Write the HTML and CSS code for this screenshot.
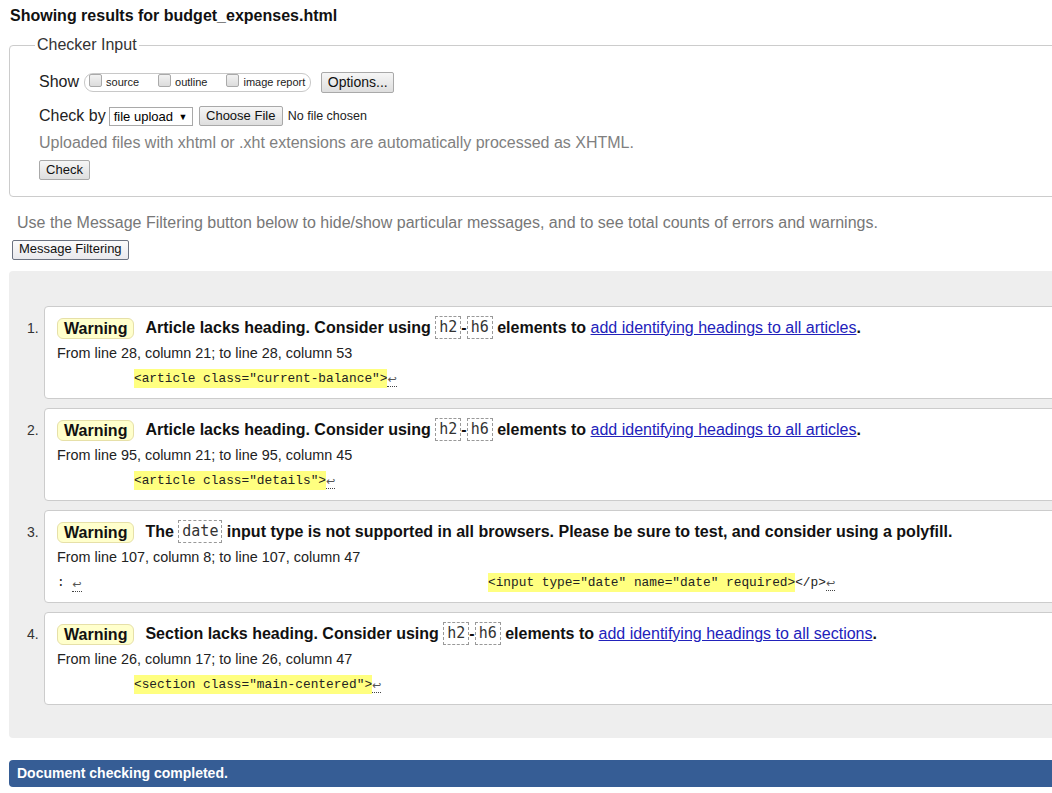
FILE: index.html
```html
<!DOCTYPE html>
<html>
<head>
<meta charset="utf-8">
<title>Nu Html Checker</title>
<link rel="stylesheet" href="styles.css">
</head>
<body>
<div class="page">
  <h2 class="title">Showing results for budget_expenses.html</h2>
  <fieldset class="checker">
    <legend>Checker Input</legend>
    <div class="row show-row">
      <span class="lbl">Show</span>
      <span class="pill">
        <label><span class="cb"></span>source</label>
        <label><span class="cb"></span>outline</label>
        <label><span class="cb"></span>image report</label>
      </span>
      <span class="btn opt">Options...</span>
    </div>
    <div class="row check-row">
      <span class="lbl">Check by</span>
      <span class="select">file upload <span class="arrow">▼</span></span>
      <span class="btn file">Choose File</span>
      <span class="nofile">No file chosen</span>
    </div>
    <p class="hint">Uploaded files with xhtml or .xht extensions are automatically processed as XHTML.</p>
    <span class="btn check">Check</span>
  </fieldset>
  <p class="filter-note">Use the Message Filtering button below to hide/show particular messages, and to see total counts of errors and warnings.</p>
  <span class="btn mf">Message Filtering</span>
  <div class="results">
    <ol class="msgs">
      <li class="msg">
        <p class="head"><span class="badge">Warning</span> <span class="text">Article lacks heading. Consider using <code class="el">h2</code>-<code class="el">h6</code> elements to <a href="#">add identifying headings to all articles</a>.</span></p>
        <p class="loc">From line 28, column 21; to line 28, column 53</p>
        <p class="extract"><span class="pre"></span><mark>&lt;article class="current-balance"&gt;</mark><span class="lf">↩</span></p>
      </li>
      <li class="msg">
        <p class="head"><span class="badge">Warning</span> <span class="text">Article lacks heading. Consider using <code class="el">h2</code>-<code class="el">h6</code> elements to <a href="#">add identifying headings to all articles</a>.</span></p>
        <p class="loc">From line 95, column 21; to line 95, column 45</p>
        <p class="extract"><span class="pre"></span><mark>&lt;article class="details"&gt;</mark><span class="lf">↩</span></p>
      </li>
      <li class="msg">
        <p class="head"><span class="badge">Warning</span> <span class="text">The <code class="el">date</code> input type is not supported in all browsers. Please be sure to test, and consider using a polyfill.</span></p>
        <p class="loc">From line 107, column 8; to line 107, column 47</p>
        <p class="extract"><span class="pre wide">: <span class="lf">↩</span></span><mark>&lt;input type="date" name="date" required&gt;</mark>&lt;/p&gt;<span class="lf">↩</span></p>
      </li>
      <li class="msg">
        <p class="head"><span class="badge">Warning</span> <span class="text">Section lacks heading. Consider using <code class="el">h2</code>-<code class="el">h6</code> elements to <a href="#">add identifying headings to all sections</a>.</span></p>
        <p class="loc">From line 26, column 17; to line 26, column 47</p>
        <p class="extract"><span class="pre"></span><mark>&lt;section class="main-centered"&gt;</mark><span class="lf">↩</span></p>
      </li>
    </ol>
  </div>
  <div class="done">Document checking completed.</div>
</div>
</body>
</html>
```

FILE: styles.css
```css
html, body {
  overflow: hidden;
}
body {
  margin: 0;
  padding: 0 0 0 9px;
  font-family: "Liberation Sans", Arial, sans-serif;
  color: #000;
  background: #fff;
}
.page {
  width: 1200px;
}
.title {
  margin: 0;
  padding: 7px 0 0 1px;
  font-size: 16px;
  line-height: 18px;
  font-weight: bold;
  color: #111;
}
.checker {
  margin: 11px 0 0 0;
  padding: 4px 0 16px 29px;
  border: 1px solid #ccc;
  border-radius: 4px;
}
.checker legend {
  padding: 0 2px;
  margin-left: -4px;
  font-size: 16px;
  color: #333;
}
.row {
  display: flex;
  align-items: center;
}
.lbl {
  font-size: 16px;
  color: #222;
}
.show-row {
  height: 22px;
  margin-top: 13px;
}
.pill {
  display: inline-flex;
  align-items: center;
  margin-left: 5px;
  height: 17px;
  padding: 0 5px 0 4px;
  border: 1px solid #c8c8c8;
  border-radius: 9px;
  font-size: 11px;
  color: #222;
}
.pill label {
  display: inline-flex;
  align-items: center;
  margin-right: 19px;
}
.pill label:last-child {
  margin-right: 0;
}
.cb {
  display: inline-block;
  width: 11px;
  height: 11px;
  border: 1px solid #aaa;
  border-radius: 2px;
  background: linear-gradient(#f2f2f2, #dcdcdc);
  margin-right: 4px;
  position: relative;
  top: -2px;
}
.btn {
  display: inline-block;
  box-sizing: border-box;
  font-size: 13px;
  line-height: 17px;
  padding: 0 7px;
  border: 1px solid #a9a9a9;
  border-radius: 2px;
  background: linear-gradient(#f6f6f6, #dedede);
  color: #111;
}
.opt {
  margin-left: 10px;
  font-size: 14px;
  height: 21px;
  line-height: 19px;
  width: 73px;
  text-align: center;
  padding: 0;
}
.check-row {
  margin-top: 13px;
  height: 20px;
}
.select {
  display: inline-block;
  margin-left: 3px;
  height: 19px;
  line-height: 17px;
  box-sizing: border-box;
  width: 84px;
  padding-left: 4px;
  border: 1px solid #a9a9a9;
  font-size: 13px;
  background: #fff;
}
.arrow {
  font-size: 9px;
  position: relative;
  top: -1px;
  margin-left: 2px;
}
.file {
  margin-left: 6px;
  height: 20px;
  width: 84px;
  line-height: 18px;
  font-size: 13px;
  text-align: center;
  padding: 0;
}
.nofile {
  margin-left: 5px;
  font-size: 12.5px;
  color: #222;
}
.hint {
  margin: 8px 0 0 0;
  font-size: 16px;
  line-height: 18px;
  color: #808080;
}
.check {
  margin-top: 8px;
  width: 51px;
  height: 20px;
  line-height: 18px;
  text-align: center;
  padding: 0;
}
.filter-note {
  margin: 17px 0 0 8px;
  font-size: 16px;
  line-height: 18px;
  color: #777;
}
.mf {
  margin: 8px 0 0 3px;
  font-size: 13px;
  line-height: 16px;
  height: 20px;
  padding: 0 6px;
  border: 1px solid #6b7280;
  border-radius: 2px;
  background: linear-gradient(#fbfbfb, #e9e9ed);
}
.results {
  margin-top: 11px;
  background: #eee;
  border-radius: 4px;
  padding: 35px 0 33px 35px;
}
.msgs {
  margin: 0;
  padding: 0;
  list-style: none;
  counter-reset: m;
  display: flex;
  flex-direction: column;
  gap: 9px;
}
.msg {
  position: relative;
  counter-increment: m;
  background: #fff;
  border: 1px solid #ccc;
  border-radius: 4px;
  height: 93px;
  box-sizing: border-box;
  padding: 10px 0 0 12px;
}
.msg::before {
  content: counter(m) ".";
  position: absolute;
  left: -18px;
  top: 13px;
  font-size: 14px;
  color: #333;
}
.head {
  margin: 0;
  height: 23px;
  display: flex;
  align-items: center;
  font-size: 16px;
  font-weight: bold;
  color: #111;
}
.badge {
  display: inline-block;
  height: 21px;
  line-height: 19px;
  box-sizing: border-box;
  padding: 0 6px;
  background: #ffffcc;
  border: 1px solid #e6e0a8;
  border-radius: 6px;
  margin-right: 11px;
}
.text {
  white-space: nowrap;
}
.el {
  display: inline-block;
  font-family: "DejaVu Sans Mono", "Liberation Mono", monospace;
  font-weight: normal;
  font-size: 15px;
  line-height: 21px;
  padding: 0 3px;
  border: 1px dashed #999;
  color: #333;
  vertical-align: middle;
  position: relative;
  top: -1px;
}
.text a {
  color: #2222bb;
  font-weight: normal;
  text-decoration: underline;
}
.loc {
  margin: 5px 0 0 0;
  font-size: 14.4px;
  line-height: 17px;
  color: #222;
}
.extract {
  margin: 7px 0 0 0;
  font-family: "Liberation Mono", "DejaVu Sans Mono", monospace;
  font-size: 12.8px;
  line-height: 19px;
  color: #222;
  white-space: pre;
  display: flex;
  align-items: center;
}
.pre {
  display: inline-block;
  width: 77px;
}
.pre.wide {
  width: 431px;
}
mark {
  background: #ffff80;
  color: #222;
  line-height: 19px;
}
.lf {
  font-family: "DejaVu Sans", sans-serif;
  font-size: 11px;
  color: #555;
  border-bottom: 1px dotted #444;
  line-height: 12px;
  position: relative;
  top: 2px;
}
.done {
  margin-top: 22px;
  height: 27px;
  line-height: 27px;
  background: #365d95;
  color: #fff;
  font-weight: bold;
  font-size: 14px;
  padding-left: 8px;
  border-radius: 4px 0 0 4px;
}
```
